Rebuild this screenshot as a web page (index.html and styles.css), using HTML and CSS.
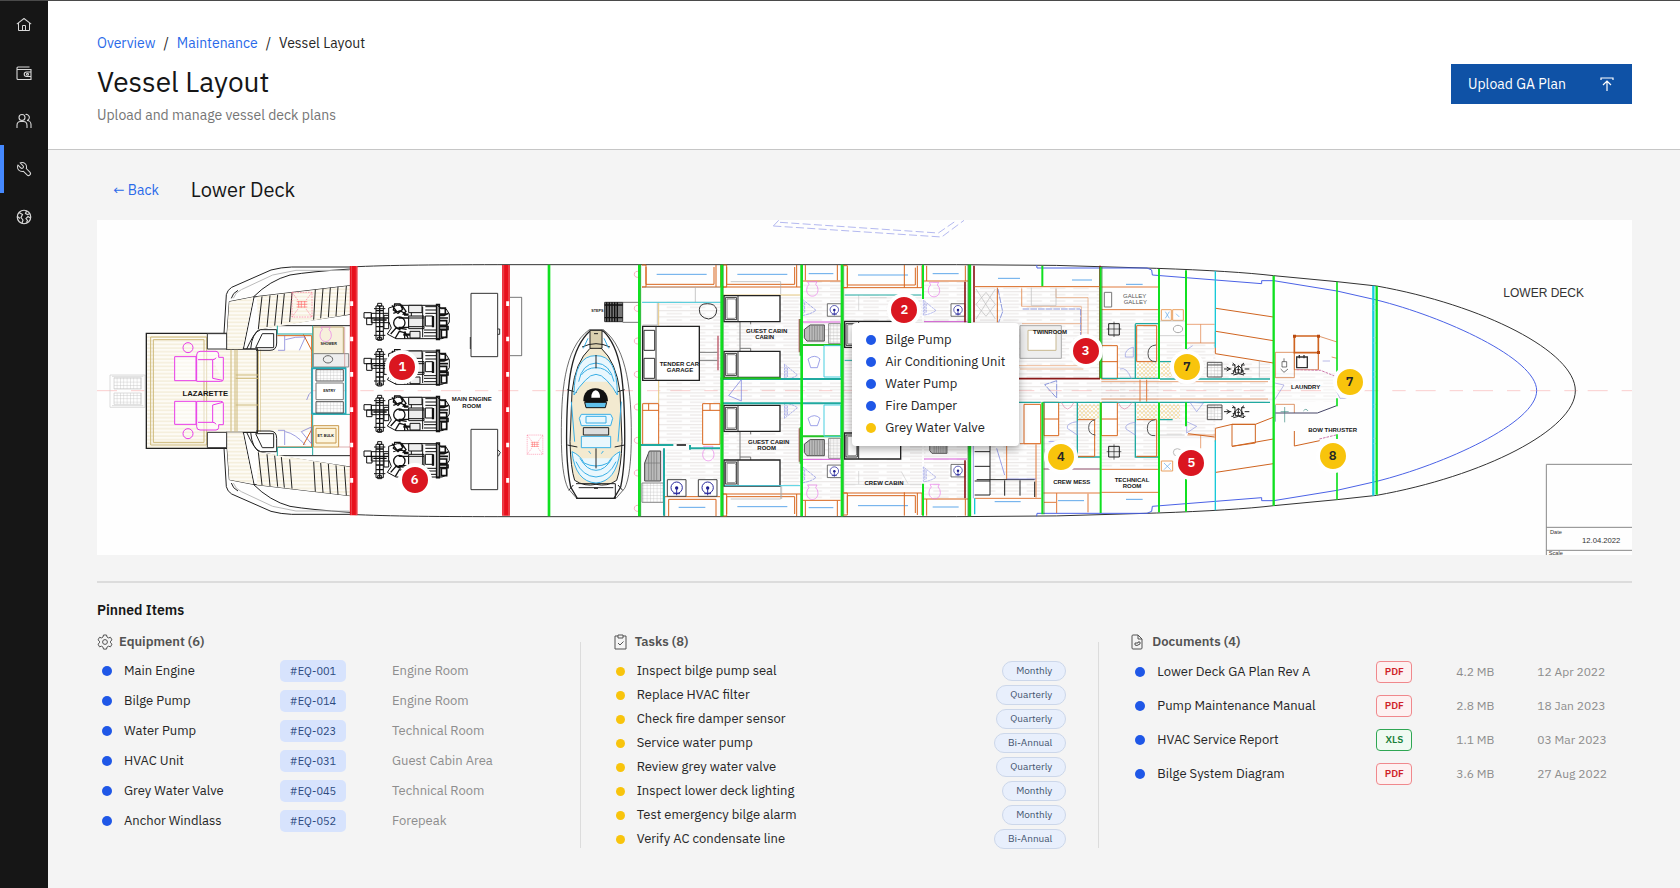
FILE: index.html
```html
<!DOCTYPE html>
<html lang="en">
<head>
<meta charset="utf-8">
<meta name="viewport" content="width=device-width, initial-scale=1">
<title>Vessel Layout</title>
<link rel="stylesheet" href="styles.css">
</head>
<body>
<div class="app">
<nav class="rail" aria-label="Main">
  <a class="rail-link" href="#home" aria-label="Home"><svg class="icon" viewBox="0 0 32 32"><path fill="currentColor" d="M16.6 2.2a1 1 0 0 0-1.2 0L1 13.4 2.2 15 4 13.6V26a2 2 0 0 0 2 2h20a2 2 0 0 0 2-2V13.6l1.8 1.4 1.2-1.6ZM18 26h-4v-8h4Zm2 0v-8a2 2 0 0 0-2-2h-4a2 2 0 0 0-2 2v8H6V12l10-7.700 10 7.800V26Z"/></svg></a>
  <a class="rail-link" href="#wallet" aria-label="Wallet"><svg class="icon" viewBox="0 0 32 32" fill="none" stroke="currentColor" stroke-width="2.200"><path d="M27 4H4a2 2 0 0 0-2 2v21a2 2 0 0 0 2 2h26V9H2M30 14h-9a4.500 4.500 0 0 0 0 9h9"/><circle cx="23" cy="18.500" r="2"/></svg></a>
  <a class="rail-link" href="#crew" aria-label="Crew"><svg class="icon" viewBox="0 0 32 32" fill="none" stroke="currentColor" stroke-width="2.200"><circle cx="12" cy="9" r="6"/><path d="M2 30v-5c0-5 3-8 7-8h6c4 0 7 3 7 8v5M19 3a6 6 0 0 1 3 12c5 0 8 4 8 8v7"/></svg></a>
  <a class="rail-link is-active" href="#maintenance" aria-label="Maintenance" aria-current="page"><svg class="icon" viewBox="0 0 32 32"><path fill="currentColor" d="M12.100 2a9.800 9.800 0 0 0-5.400 1.600L13.100 10a2.100 2.100 0 0 1 .2 3 2.100 2.100 0 0 1-3-.2L3.700 6.400A9.840 9.840 0 0 0 2 12.100 10.140 10.140 0 0 0 12.100 22.200a10.900 10.900 0 0 0 2.600-.3l6.700 6.700a5 5 0 0 0 7.100-7.100l-6.700-6.700a10.900 10.900 0 0 0 .3-2.600A10 10 0 0 0 12.100 2Zm8 10.100a7.610 7.610 0 0 1-.3 2.100l-.3 1.100.8.800 6.700 6.700a2.880 2.880 0 0 1 .9 2.100A2.720 2.720 0 0 1 27 27a2.900 2.900 0 0 1-4.200 0l-6.700-6.700-.8-.8-1.100.3a7.610 7.610 0 0 1-2.100.3 8.270 8.270 0 0 1-5.700-2.300A7.630 7.630 0 0 1 4 12.100a8.330 8.330 0 0 1 .3-2.200l4.400 4.400a4.140 4.140 0 0 0 5.900.2 4.140 4.140 0 0 0-.2-5.900L10 4.200a6.450 6.450 0 0 1 2-.3 8.270 8.270 0 0 1 5.700 2.300A8.490 8.490 0 0 1 20.100 12.100Z"/></svg></a>
  <a class="rail-link" href="#fleet" aria-label="Fleet"><svg class="icon" viewBox="0 0 32 32" fill="none" stroke="currentColor" stroke-width="2.400"><circle cx="16" cy="16" r="13.500"/><path d="m6 7 7 4-3 6 4 5-2 6M3 15l5 4M21 4l-2 5 4 2 5-2M29 18l-5-3-4 4 3 4-2 4"/></svg></a>
</nav>
<div class="page">
<header class="page-head">
  <div>
    <nav class="crumbs" aria-label="Breadcrumb"><a href="#overview">Overview</a><span>/</span><a href="#maintenance">Maintenance</a><span>/</span><span>Vessel Layout</span></nav>
    <h1>Vessel Layout</h1>
    <p class="subtitle">Upload and manage vessel deck plans</p>
  </div>
  <button class="upload" type="button">Upload GA Plan<svg class="icon" viewBox="0 0 16 16" fill="none" stroke="currentColor" stroke-width="1.200"><path d="M2 4V2h12v2M8 15V5M4 9l4-4 4 4"/></svg></button>
</header>
<main>
  <div class="deck-bar"><a class="back" href="#decks">← Back</a><h2>Lower Deck</h2></div>
  <section class="plan" aria-label="Lower deck plan">
  <svg class="drawing" viewBox="21 15 4605 1005" fill="none" stroke-width="3">
    <defs>
      <pattern id="wood" width="70" height="19" patternUnits="userSpaceOnUse"><path d="M0 2h70M0 11h46" stroke="#a99a96" stroke-width="1.500" opacity=".55"/></pattern>
      <pattern id="teak" width="90" height="22" patternUnits="userSpaceOnUse"><path fill="#fdfbf5" d="M0 0h90v22H0z"/><path d="M0 3h90M0 14h90" stroke="#e6dab4" stroke-width="2"/></pattern>
      <pattern id="tile" width="10" height="10" patternUnits="userSpaceOnUse"><path d="M0 1h10M1 0v10" stroke="#bbb" stroke-width="1.200"/></pattern>
      <pattern id="mesh" width="12" height="12" patternUnits="userSpaceOnUse"><path d="M0 0l12 12M12 0L0 12" stroke="#f0cf74" stroke-width="1.500"/></pattern>
      <symbol id="engine" viewBox="0 0 260 112" overflow="visible">
        <g stroke="#111" stroke-width="3">
          <path fill="#fff" d="M0 28h22v16H0zM8 44h16v20H8zM22 30h52v28H22zM36 8h22v100H36zM41 0h12v8H41zM41 102h12v9H41zM30 16h34M30 96h34M60 36h14v40H60z"/>
          <path d="M36 22h22M36 70h22M36 84h22M47 8v100M22 44h52M28 50h40" stroke-width="4"/>
          <path fill="#fff" d="M74 14l26-8h120l12 10h14l10 16v24l-8 12v32l-14 6H96L70 92l12-18-8-20z"/>
          <path d="M84 6l14 18M92 2h16l8 16-14 12-14-10zM112 4l14 20-10 10M88 30l20-8 18 10M80 92l16-18 14 6M94 104l12-20 16 4v18M122 84l10 20M104 74l24 4" stroke-width="4"/>
          <circle cx="106" cy="58" r="17" stroke-width="4"/><path d="M104 44h30v28h-30" stroke-width="4"/>
          <path fill="#eee" d="M134 38h46v38h-46zM134 6h40v22h-40zM138 84h30v20h-30z"/>
          <path d="M134 44h46M134 70h46M142 28v10M176 10v92M184 38h22v30h-22zM184 10h34M184 20h34M184 30h34M180 80h38M180 88h38M180 98h38" />
          <path d="M218 4h8v104h-8zM226 14h18v18h-18zM226 36h14l14-6M226 44h26M228 52h20v14h-20M226 70h26v8h-26M232 80h16v22h-16z" stroke-width="5"/>
          <path d="M207 38v34M120 34h14M118 94h20" stroke-width="7"/>
        </g>
      </symbol>
      <symbol id="bed" viewBox="0 0 168 78" overflow="visible"><path fill="#fff" stroke="#222" stroke-width="4" d="M0 0h168v78H0z"/><path stroke="#333" d="M4 6h34v66H4zM42 0v78"/><path stroke="#555" stroke-width="2" d="M9 10h22q5 0 5 6v46q0 6-5 6H9z"/></symbol>
      <symbol id="basin" viewBox="0 0 56 50" overflow="visible"><path fill="#fff" stroke="#444" d="M0 0h56v50H0z"/><circle cx="28" cy="24" r="17" stroke="#2a2a9c"/><circle cx="28" cy="25" r="5" fill="#1a1a8c"/><path stroke="#2a2a9c" d="M28 25v22M18 42h20"/></symbol>
      <symbol id="wc" viewBox="0 0 34 44" overflow="visible"><path stroke="#e879e8" stroke-width="2" d="M3 0h28l-4 8q7 6 7 16c0 26-34 26-34 0q0-10 7-16z"/></symbol>
      <symbol id="shower" viewBox="0 0 70 60" overflow="visible"><path fill="#bbb" stroke="#444" d="M22 4h44v50H12L4 44V18z"/><path stroke="#777" stroke-width="2" d="M20 6v48M28 6v48M36 6v48M44 6v48M52 6v48M60 6v48"/></symbol>
      <symbol id="door" viewBox="0 0 44 52" overflow="visible"><path stroke="#7f86e0" stroke-width="2" stroke-dasharray="9 2" d="M0 0v52Q28 48 44 36L0 0M5 8v38M10 12v32"/></symbol>
      <g id="console"><path stroke="#555" fill="url(#tile)" d="M0 6h44v44H0zM0 14h44"/><path stroke="#222" d="M50 26h22M58 20l10 6-10 6M76 8q10 4 7 14l-5 18h-6M110 8q-10 4-7 14l5 18h6M84 24l10-8 8 8v14H84zM78 44q16-8 32 0M88 28h10M93 16v22M74 14h10M102 14h10M112 26h14M76 32h8M102 32h8"/></g>
      <symbol id="warn" viewBox="0 0 64 78" overflow="visible"><path stroke="#f79" stroke-width="2" stroke-dasharray="5 3" d="M2 2h60v74H2zM2 2l18 24M62 2L44 26M2 76l18-24M62 76L44 52"/><path stroke="#f66" stroke-width="2" d="M16 30h32M16 38h32M16 46h32M22 28v20M30 28v20M40 28v20"/></symbol>
      <g id="stern">
        <path stroke="#222" d="M402 355l7-116q3-14 16-22l118-52q30-8 62-9h175M424 250q4-16 20-24M418 260l-10 142M418 260l72-14 290-34M490 246q50-50 110-66 60-10 180-18M492 246l-32 156M470 402q20-44 36-58l56-13 218-33M562 332h218"/>
        <path stroke="#bbb" d="M430 250q6-18 24-26l94-44 70-14h160"/>
        <path fill="url(#teak)" stroke="none" d="M418 260l72-14-32 156h-50zM500 245l280-33v86l-274 46z"/>
        <path stroke="#222" d="M516 244l-11 98M540 241l-9 95M563 239l-9 93M583 236l-9 92M606 233l-7 88M676 224l-5 90M699 221l-7 89M721 218l-6 89M744 215l-6 88M769 213l-6 87M482 402q4-50 30-58h48v40q0 22-20 22h-42M497 398l20-42h34v42z"/>
        <path stroke="#333" fill="#fff" d="M352 356h58v46h-58z"/>
      </g>
      <g id="hull">
        <path stroke="#333" d="M780 156C900 150 1050 149 1260 149H2600Q2900 148 3200 160 3430 168 3551 182L3741 200 3860 213C4180 270 4456 410 4456 527"/>
        <path stroke="#4b62e6" d="M2840 150l1 9h330l14 6 2 15 328 26v-9h36L3741 228 3860 255C4060 305 4340 430 4340 527"/>
      </g>
      <g id="window"><path stroke="#d8651c" d="M0 0h12v66h-12M0 66h240M222 66V0M236 0v66M12 6v52h204V6"/><path stroke="#5fa8ea" d="M44 28h150"/></g>
    </defs>
    <path fill="#fefefe" d="M21 15h4605v1005H21z"/>
    <path stroke="#f7b5b5" stroke-width="2" stroke-dasharray="60 42 40 30" d="M21 527h4605"/>
    <g stroke="#ccc" stroke-width="2"><path d="M60 480h105v97H60zM66 484h94M66 572h94"/><path fill="url(#tile)" d="M72 488h82v34H72zM72 534h82v34H72z"/></g>

    <path fill="url(#teak)" stroke="#222" stroke-width="4" d="M169 355h241v47h92v250h-92v48H169z"/>
    <path stroke="#cdb878" d="M182 366h168v324H182zM190 374h152v308H190zM435 404v246M441 404v246M505 404v246M512 404v246M437 480h68M437 490h68M437 570h68M423 404v246"/>
    <path fill="url(#teak)" d="M512 404h152v246H512z"/>
    <use href="#stern"/><use href="#stern" transform="matrix(1 0 0 -1 0 1054)"/>
    <use href="#hull"/><use href="#hull" transform="matrix(1 0 0 -1 0 1054)"/>
    <g stroke="#e83be8"><path fill="#fff8" d="M254 425h64v72h-64zM320 420q0-11 10-11h48q8 0 8 10v8h14v66q0 6-8 6h-72zM324 434h44q8 0 10-6M368 434v56l30 6M254 559h64v69h-64zM320 559h72q8 0 8 6v64h-14v8q0 8-8 8h-48q-10 0-10-10zM324 622h44q8 0 10 6M368 622v-52l30-8"/><circle cx="294" cy="398" r="15"/><circle cx="294" cy="656" r="15"/></g>
    <path stroke="#d8651c" d="M562 362h103v334H562M640 358l26 50M640 690l26-48"/><path stroke="#20a9a0" d="M562 357h105M562 332v26M562 697h105M668 720v-122h112M562 697v26M668 332v126h100"/>
    <path stroke="#6c6cd0" stroke-width="2" d="M584 362v44h-20M586 374q30-10 60-8l-18 40M584 690v-44h-20M586 650q30 6 60 40M634 650l30-14v50zM668 460v136M650 555q6-20 14-24"/>
    <path fill="#f7f0dc" stroke="#b9a26a" d="M670 336h90v80h-90z"/><path fill="#eee" stroke="#888" d="M670 416h106v40H670z"/><ellipse cx="714" cy="433" rx="14" ry="11" stroke="#666"/><use href="#wc" x="690" y="336" width="34" height="44"/>
    <path stroke="#21a9b8" stroke-width="5" d="M666 460h101v136H666z"/><path fill="url(#tile)" stroke="#555" d="M678 464h82v34h-82zM678 560h82v34h-82z"/><path fill="#fff" stroke="#777" d="M678 504h82v50h-82z"/>
    <path fill="#fdf6e0" stroke="#c99a4e" d="M670 632h76v64h-76zM678 640h60v44h-60z"/><path stroke="#c88" stroke-width="2" d="M746 696h34M764 336v120"/>
    <use href="#warn" x="604" y="230" width="64" height="78"/>
    <g stroke="#e8101c" stroke-width="23"><path d="M791 153v748M1248 150v752"/></g><g stroke="#fff" stroke-width="2" opacity=".35"><path d="M784 153v748M799 153v748M1241 150v752M1256 150v752"/></g>
    <g stroke="#fff" stroke-width="9" stroke-dasharray="14 92"><path d="M785 259v600M1253 259v600"/></g>
    <use href="#engine" x="822" y="265" width="260" height="112"/><use href="#engine" x="822" y="402" width="260" height="112"/><use href="#engine" x="822" y="541" width="260" height="112"/><use href="#engine" x="822" y="680" width="260" height="112"/>
    <g stroke="#333"><path d="M1143 235h80v190h-80zM1143 643h80v181h-80zM1223 342h6v16h-6M1141 366v36M1223 704l8 8-6 12"/><path stroke-width="2" d="M1260 247h35v175h-35"/></g>

    <g transform="translate(1170)">
      <use href="#warn" x="140" y="656" width="50" height="66"/>
      <path stroke="#b4b9f0" stroke-dasharray="24 10" d="M880 33L1385 66L1452 16M900 22L1375 54L1430 16"/><path stroke="#b4b9f0" d="M880 33l16-17"/>
      <g stroke="#333"><path fill="#777" d="M374 262h54v58h-54z"/><path stroke="#111" d="M380 262v58M388 262v58M396 262v58M404 262v58M412 262v58M374 270h54M374 308h54" stroke-width="4"/><path stroke-width="2" d="M428 262h48M428 322h48"/></g>
      <g stroke="#f58aa0" stroke-width="2"><path d="M476 170a9 9 0 1 0 0 16M476 272a9 9 0 1 0 0 16M476 370a9 9 0 1 0 0 16M476 470a9 9 0 1 0 0 16M476 568a9 9 0 1 0 0 16M476 668a9 9 0 1 0 0 16M476 766a9 9 0 1 0 0 16M476 872a9 9 0 1 0 0 16"/></g>
      <g stroke="#222"><path stroke-width="2" d="M328 344C250 400 244 540 244 660q0 120 20 160l26 30h118l26-30q20-40 20-160c0-120-10-260-84-316z"/><path stroke-width="4" fill="#fff" d="M330 348C272 400 262 500 260 640q-2 110 12 176l20 34h110l20-34q14-66 12-176c-2-140-10-240-64-292z"/><path fill="#f3ead0" d="M330 400q-44 40-54 130l-6 150q2 80 14 116 30 20 64 12 34 8 62-12 14-40 16-116l-6-150q-12-90-56-130-18-8-34 0z"/><path fill="#d9cfae" d="M330 346h36v54h-36z"/><path d="M306 396q42-20 84 0M262 524l28 8M434 524l-28 8M262 690l30 6M434 690l-30 6M288 806h118v44H288M280 810l-14 16M414 810l14 16M296 818h104" stroke-width="3"/></g>
      <g stroke="#39afe6"><path d="M282 540q0-120 66-118 64-2 64 118-12-24-32-44-32-36-64 0-20 20-34 44zM296 500q10-54 52-56 42 2 54 56M304 480q16-22 44-22t44 22M276 710q10 90 72 94 60-4 72-94-22 10-36 34-36 18-72 0-12-24-36-34zM288 740q20 44 60 46 40-2 60-46M300 730q20 36 48 36t48-36" fill="#e9f7fd"/><path fill="#e9f7fd" d="M304 598h88l6 12-6 22h-88l-6-22zM304 664h88v34h-88zM318 604h60v20h-60z"/><path d="M274 560l10 120M424 560l-10 120M324 370l-14 30M372 370l14 30M326 708l6 8M370 708l-6 8"/></g>
      <path fill="#111" d="M310 558q0-36 36-38 36 2 38 38l-20 8h-36z"/><path fill="#fff" d="M334 548q0-20 13-22 13 2 13 22z"/><path fill="#5fc0ea" stroke="#111" d="M314 562h66l-4 16h-58z"/><path fill="#ddd" stroke="#222" d="M310 638h76v22h-76z"/><path stroke="#222" d="M348 420v40M348 700v60M342 356h12M342 820h12"/>

      <g fill="url(#wood)"><path d="M536 260h188v430H536zM488 560h230v130H488zM732 240h230v250H732zM732 570h230v240H732zM970 198h112v190H970zM970 668h112v186H970zM732 500h1650v62H732zM556 704h164v88H556z"/></g>
      <use href="#window" x="486" y="150"/><use href="#window" x="728" y="150"/>
      <use href="#window" transform="matrix(1 0 0 -1 728 903)"/><path stroke="#d8651c" d="M554 903v-58h166M566 903v-50h142v50M968 198h114M976 150v46M1072 150v46M968 856h114M976 903v-46M1072 903v-46"/><path stroke="#5fa8ea" d="M596 877h80M986 176h74M986 878h74"/>
      <path stroke="#aaa" stroke-width="2" d="M488 217h234M488 262h234M646 217v45M488 330h44V264M752 200h150v38M752 852h150v-38M905 812v40"/><path stroke="#e6c880" d="M536 262v70M536 498v66M730 240h230"/>
      <path fill="#fff" stroke="#222" stroke-width="4" d="M488 334h170v162H488z"/><path stroke="#333" d="M528 334v162M492 346h32v60h-32zM492 430h32v60h-32zM658 284q0-18 24-18t28 18q0 24-24 28-28-4-28-28z"/>
      <path stroke="#d8651c" fill="#fff" d="M488 566h48v122h-48zM668 566h52v122h-52zM488 586h48M668 586h52M506 566v20M690 566v20"/>
      <path stroke="#b56" stroke-width="4" d="M714 362v104M958 312v100M958 640v100"/><path stroke="#777" d="M660 412h52M660 436h52M732 320h48v90M732 650h48v86M780 308h32v20M780 400h32v20M780 638h32v20M780 726h32v20"/>
      <use href="#bed" x="732" y="242" width="168" height="78"/><use href="#bed" x="732" y="409" width="168" height="78"/><use href="#bed" x="732" y="571" width="168" height="78"/><use href="#bed" x="732" y="735" width="168" height="78"/>
      <use href="#shower" x="968" y="326" width="70" height="58"/><use href="#shower" x="968" y="670" width="70" height="58"/><path fill="#bbb" stroke="#444" d="M508 708h34v90h-48v-54z"/><path stroke="#777" stroke-width="2" d="M494 744h48M506 712v84M514 708v90M522 708v90M530 708v90"/>
      <path fill="url(#tile)" stroke="#888" d="M1046 326h36v60h-36zM1046 670h36v60h-36zM486 804h64v58h-64z"/>
      <path stroke="#d85ad8" d="M968 321h114M968 733h114M550 704v90"/><use href="#wc" x="980" y="200" width="34" height="44"/><use href="#wc" x="980" y="810" width="34" height="44"/><use href="#wc" x="668" y="694" width="34" height="44"/>
      <use href="#basin" x="562" y="794" width="56" height="50"/><use href="#basin" x="655" y="794" width="56" height="50"/><use href="#basin" x="1042" y="260" width="42" height="50"/><use href="#basin" x="1042" y="744" width="42" height="50"/>
      <use href="#door" x="964" y="250" width="44" height="52"/><use href="#door" x="964" y="752" width="44" height="52"/><use href="#door" x="908" y="448" width="50" height="46"/><use href="#door" transform="matrix(1 0 0 -1 908 610)" width="50" height="46"/><path stroke="#6c74dc" d="M784 494l-38 48 38 16zM984 432q20-16 36 0l-8 26h-20zM984 610q20-16 36 0l-8 22h-20z" stroke-width="2"/>
      <path stroke="#20a9a0" stroke-width="6" d="M482 690h98M630 700h90M630 690v14M722 492h362M724 565h362M552 700v202"/><path stroke="#222" stroke-width="5" d="M590 690h28"/>
      <path stroke="#25c325" stroke-width="6" d="M965 390h118M965 664h118M722 490h180M962 312v110M962 636v110"/><path stroke="#48cfe0" d="M1032 392h50v94h-50zM1032 570h50v94h-50zM734 812h226M486 262h236"/>
      <g stroke="#10e020" stroke-width="8"><path d="M207 149v755M478 149v755M725 149v755M965 149v755M1086 149v755" /></g><path stroke="#129e20" stroke-width="2" d="M482 149v755M730 149v755M1091 149v755"/>
    </g>

    <g transform="translate(2250)">
      <g fill="url(#wood)"><path d="M14 240h232v580H14zM252 200h128v190H252zM252 660h128v190H252zM404 218h376v272H404zM784 290h172v470H784zM450 680h152v160H450zM610 560h170v170H610zM960 380h166v110H960zM960 562h166v110H960zM1126 440h164v50h-164z"/></g>
      <use href="#window" x="10" y="152"/><use href="#window" transform="matrix(1 0 0 -1 10 900)"/>
      <path stroke="#d8651c" d="M193 150v68M193 832v70M252 198h132M260 152v46M376 152v46M252 852h132M260 902v-50M376 902v-50"/><path stroke="#5fa8ea" d="M278 176h78M278 876h78M474 190h66M696 195h60M464 860h78M654 857h78M858 208h50M858 853h50"/>
      <use href="#bed" x="14" y="288" width="168" height="140"/><use href="#bed" x="14" y="620" width="168" height="146"/>
      <path stroke="#ccc" stroke-width="2" d="M56 240v46M90 248h50M56 768v40M14 808h230M184 770l20 36"/><path stroke="#20a9a0" d="M14 240h230M14 436h24"/>
      <use href="#shower" x="260" y="670" width="70" height="50"/><path stroke="#d85ad8" d="M252 320h130M252 732h130"/><use href="#wc" x="265" y="202" width="34" height="44"/><use href="#wc" x="267" y="808" width="34" height="44"/><use href="#basin" x="333" y="260" width="42" height="50"/><use href="#basin" x="333" y="742" width="42" height="50"/><use href="#door" x="250" y="252" width="38" height="52"/><use href="#door" x="250" y="752" width="38" height="52"/>
      <path stroke="#8b1a1a" stroke-width="5" d="M402 152v170M375 200v122M375 736v114M536 491h244M780 152v338"/><path stroke="#d8651c" d="M404 215h376M472 218v104"/><path stroke="#e59a68" stroke-width="2" d="M545 218v56M648 222v26h96v204M545 222v52h180M546 326h180M536 452h200M540 462h190M724 276v160"/>
      <path stroke="#5566cc" stroke-width="2" d="M548 282h172M722 282v156M474 222l14 68-12 32M650 497l-36 12 36 40z" stroke-dasharray="20 3"/><path stroke="#bbb" stroke-width="2" d="M408 222l58 90M466 222l-58 90M408 268l30-36 28 36-28 36zM574 218v54h74v-54"/>
      <path stroke="#aaa" fill="#eee" d="M540 332h124v98H540z"/><path stroke="#c8b890" fill="#fff" d="M564 346h84v60h-84z"/>
      <path fill="#fff" stroke="#d8651c" d="M552 568h50v118h-50zM612 562h44v100h-44zM612 612h44M784 392h48v100h-48zM784 440h48M784 562h48v100h-48zM784 612h48"/>
      <g stroke="#e07a3c"><path d="M610 762h170M610 834h170M650 834v60M744 836v56M612 862h36M784 216h172M784 284h172M784 763h172M784 832h172M404 850h200M500 686v108M588 688v160M540 686h64M900 494v66M920 494v66"/><path stroke-width="2" d="M784 500h500M784 552h500M1040 328h84M1082 328v56M1040 384h86M1042 660h84M1082 660v40"/></g>
      <path stroke="#222" d="M404 710h46M404 754h46M404 798h46M404 840h46M450 684v156M410 794h174M494 796v46M540 796v46M584 800v46"/><path stroke="#6c74dc" stroke-width="2" d="M500 792h88M626 680h20M612 762h168M470 700l24 80M400 686v164"/>
      <g stroke="#222"><path fill="#eee" d="M806 326h32v34h-32zM806 694h32v32h-32z"/><path stroke-width="2" d="M800 342h44M822 320v46M800 710h44M822 688v46"/><path stroke="#777" d="M793 232h22v44h-22z"/></g>
      <g stroke="#20a9a0" stroke-width="4"><path d="M536 562h66M608 562h172M786 562h170M960 492h330M958 562h332M786 490h170M712 562v164h68M886 326h70M886 328v162M886 562v164h68M960 440h38M960 614h38"/></g>
      <g fill="url(#mesh)"><path d="M890 442h60v48h-60zM714 568h64v44h-64zM890 568h62v44h-62zM960 568h60v44h-60zM962 442h34v44h-34z"/></g>
      <path stroke="#d8651c" d="M890 332h60v108h-60zM714 614h50v110h-50M890 614h60v110h-60"/><path stroke="#555" d="M948 390q-24 2-24 26t24 24M766 614q-20 4-20 24t20 22M946 614q-24 2-24 26t24 22"/>
      <g stroke="#8f95e0" stroke-width="2"><path d="M880 396q-28 8-24 30h24zM840 462q20-8 34 30M712 620q-34 4-30 20l30 20zM886 622q-34 4-28 20l28 18zM1040 620l30 14-30 20zM1040 404l18-12M1050 562l20 28 20-26z"/><path stroke="#d8a" d="M664 562q18 40 38 0M834 562q18 40 42 0"/></g>
      <path stroke="#e9a060" d="M964 284h30v32h-30zM998 284h32v32h-32zM964 738h34v30h-34z"/><path stroke="#bbb" stroke-width="2" d="M960 362h74M960 660h74M960 318h74"/><ellipse cx="1014" cy="342" rx="14" ry="11" stroke="#aaa"/><ellipse cx="1012" cy="712" rx="12" ry="11" stroke="#bbb"/>
      <path stroke="#5fa8ea" stroke-width="2" d="M976 290l12 20M988 290l-12 20M1008 296l10 10M972 744l20 20M992 744l-20 20"/>
      <g stroke="#cf6420"><path d="M1128 280l172 26M1128 349l172 28M1126 350v66l174 28M1128 772l172-26M1126 640l50-12h70l56-22M1176 628h70v56l-70 10zM1176 694l124-22M1044 656l80 10M1126 640v40"/></g>
      <use href="#console" transform="translate(1102 436)"/><use href="#console" transform="translate(1102 564)"/><path stroke="#aaa" stroke-width="2" d="M1258 436v52"/>
      <path stroke="#17c9d8" stroke-width="4" d="M1126 168v230M1126 676v210M404 850v48"/>
      <g stroke="#10e020" stroke-width="6"><path d="M249 149v103M249 806v96M607 152v62M607 562v336M782 156v334M782 562v332M957 162v330M957 562v330M1038 166v236M1038 562v72M1038 760v130M6 149v755"/></g><path stroke="#10d020" stroke-width="9" d="M389 149v755"/><path stroke="#20761b" stroke-width="2" d="M384 149v755M786 156v334M612 562v336"/>
    </g>

    <g transform="translate(3420)">
      <g fill="url(#wood)" opacity=".6"><path d="M134 470h186v90H134z"/></g>
      <g stroke="#cf6420"><path stroke-width="5" d="M193 363h72v50h-72z"/><path stroke-width="2" d="M136 412h57v76h-57zM193 412v52h72v-50M265 363l56 18M265 464v-50M305 426l16 4M136 568h57v26"/><path d="M193 648v45l76-16"/></g><path fill="#b84a10" d="M189 359h9v9h-9zM261 359h9v9h-9zM261 408h9v9h-9z"/>
      <g stroke="#333"><path stroke-width="4" d="M200 426h32v32h-32zM208 420v10M222 420v10"/><path stroke-width="2" d="M156 440h14v16h-14zM162 430v10M152 462l10 10 12-10"/><path stroke="#446" d="M136 594h126l58-22"/><path stroke="#3a8a80" d="M152 590h24M164 576v46M220 588q8-10 14 0M136 570v50" stroke-width="2"/></g>
      <path stroke="#99d" stroke-width="2" d="M134 504l28 6-28 44M320 530l10 20h20M278 438h22" /><path stroke="#c7a" stroke-dasharray="8 3" d="M200 464l72 2 44 18M268 672l50-12"/>
      <path stroke="#18cfe0" stroke-width="7" d="M430 212v630"/><path stroke="#9be6ee" stroke-width="2" d="M438 268h-8M438 286h-8M438 368h-8M438 384h-8M438 470h-8M438 486h-8M438 568h-8M438 582h-8M438 670h-8M438 686h-8M438 766h-8M438 780h-8"/>
      <g stroke="#10e020" stroke-width="7"><path d="M131 182v690M440 213v626"/></g><path stroke="#10e020" stroke-width="5" d="M321 200v270M321 550v24M321 658v14M321 772v82"/>
      <path stroke="#888" d="M1206 748H949v272M949 937h257M949 1006h257"/>
    </g>
    <g class="room-text">
      <text x="346" y="543" class="room-lg">LAZARETTE</text><text x="1145" y="559">MAIN ENGINE</text><text x="1145" y="579">ROOM</text>
      <text x="1768" y="452">TENDER CAR</text><text x="1770" y="472">GARAGE</text><text x="2030" y="354">GUEST CABIN</text><text x="2024" y="372">CABIN</text><text x="2036" y="688">GUEST CABIN</text><text x="2030" y="706">ROOM</text>
      <text x="2382" y="809">CREW CABIN</text><text x="2880" y="358">TWINROOM</text><text x="3134" y="250" class="room-light">GALLEY</text><text x="3136" y="268" class="room-light">GALLEY</text><text x="2945" y="806">CREW MESS</text><text x="3126" y="800">TECHNICAL</text><text x="3126" y="820">ROOM</text><text x="3647" y="523">LAUNDRY</text><text x="3728" y="651">BOW THRUSTER</text>
      <text x="716" y="391" class="room-sm">SHOWER</text><text x="718" y="530" class="room-sm">ENTRY</text><text x="707" y="666" class="room-sm">ET. BULK</text><text x="1522" y="290" class="room-sm">STEPS</text>
    </g>
    <g class="sheet-text"><text x="4240" y="247" class="sheet-title">LOWER DECK</text><text x="4380" y="956">Date</text><text x="4476" y="984" class="sheet-date">12.04.2022</text><text x="4376" y="1020">Scale</text></g>
  </svg>
  <button class="pin red pin-main" type="button">1</button>
  <button class="pin red pin-six" type="button">6</button>
  <button class="pin red pin-two" type="button" aria-expanded="true">2</button>
  <button class="pin red pin-three" type="button">3</button>
  <button class="pin amber pin-four" type="button">4</button>
  <button class="pin red pin-five" type="button">5</button>
  <button class="pin amber pin-seven" type="button">7</button>
  <button class="pin amber pin-laundry" type="button">7</button>
  <button class="pin amber pin-eight" type="button">8</button>
  <ul class="popover"><li><i class="dot"></i>Bilge Pump</li><li><i class="dot"></i>Air Conditioning Unit</li><li><i class="dot"></i>Water Pump</li><li><i class="dot"></i>Fire Damper</li><li><i class="dot yellow"></i>Grey Water Valve</li></ul>
  </section>
  <section class="pinned">
    <h3>Pinned Items</h3>
    <div class="columns">
      <section class="column equipment">
        <h4><svg class="icon" viewBox="0 0 16 16" fill="none" stroke="currentColor"><circle cx="8" cy="8" r="2.400"/><path d="M6.500 1h3l.5 2 1.500.9 2-.6 1.500 2.600L13.500 7.200v1.600l1.500 1.400-1.500 2.600-2-.6-1.500.9-.5 2h-3l-.5-2-1.500-.9-2 .6L1 10.200l1.500-1.400V7.200L1 5.900l1.500-2.600 2 .6L6 3z" stroke-linejoin="round"/></svg>Equipment (6)</h4>
        <table><tbody>
          <tr><td><i class="dot"></i></td><td>Main Engine</td><td><span class="code">#EQ-001</span></td><td class="muted">Engine Room</td></tr>
          <tr><td><i class="dot"></i></td><td>Bilge Pump</td><td><span class="code">#EQ-014</span></td><td class="muted">Engine Room</td></tr>
          <tr><td><i class="dot"></i></td><td>Water Pump</td><td><span class="code">#EQ-023</span></td><td class="muted">Technical Room</td></tr>
          <tr><td><i class="dot"></i></td><td>HVAC Unit</td><td><span class="code">#EQ-031</span></td><td class="muted">Guest Cabin Area</td></tr>
          <tr><td><i class="dot"></i></td><td>Grey Water Valve</td><td><span class="code">#EQ-045</span></td><td class="muted">Technical Room</td></tr>
          <tr><td><i class="dot"></i></td><td>Anchor Windlass</td><td><span class="code">#EQ-052</span></td><td class="muted">Forepeak</td></tr>
        </tbody></table>
      </section>
      <section class="column tasks">
        <h4><svg class="icon" viewBox="0 0 16 16" fill="none" stroke="currentColor"><path d="M5 2H2v13h11V2h-3M5 1h5v3H5zM5 9l2 2 3.500-3.500"/></svg>Tasks (8)</h4>
        <ul>
          <li><i class="dot yellow"></i>Inspect bilge pump seal<span class="tag">Monthly</span></li>
          <li><i class="dot yellow"></i>Replace HVAC filter<span class="tag">Quarterly</span></li>
          <li><i class="dot yellow"></i>Check fire damper sensor<span class="tag">Quarterly</span></li>
          <li><i class="dot yellow"></i>Service water pump<span class="tag">Bi-Annual</span></li>
          <li><i class="dot yellow"></i>Review grey water valve<span class="tag">Quarterly</span></li>
          <li><i class="dot yellow"></i>Inspect lower deck lighting<span class="tag">Monthly</span></li>
          <li><i class="dot yellow"></i>Test emergency bilge alarm<span class="tag">Monthly</span></li>
          <li><i class="dot yellow"></i>Verify AC condensate line<span class="tag">Bi-Annual</span></li>
        </ul>
      </section>
      <section class="column documents">
        <h4><svg class="icon" viewBox="0 0 16 16" fill="none" stroke="currentColor"><path d="M8 1H3q-1 0-1 1v12q0 1 1 1h8q1 0 1-1V5zM8 1v4h4M5 11V9h3V8h2v2L7 11.500z"/></svg>Documents (4)</h4>
        <table><tbody>
          <tr><td><i class="dot"></i></td><td>Lower Deck GA Plan Rev A</td><td><span class="file">PDF</span></td><td class="muted">4.2 MB</td><td class="muted">12 Apr 2022</td></tr>
          <tr><td><i class="dot"></i></td><td>Pump Maintenance Manual</td><td><span class="file">PDF</span></td><td class="muted">2.8 MB</td><td class="muted">18 Jan 2023</td></tr>
          <tr><td><i class="dot"></i></td><td>HVAC Service Report</td><td><span class="file sheet">XLS</span></td><td class="muted">1.1 MB</td><td class="muted">03 Mar 2023</td></tr>
          <tr><td><i class="dot"></i></td><td>Bilge System Diagram</td><td><span class="file">PDF</span></td><td class="muted">3.6 MB</td><td class="muted">27 Aug 2022</td></tr>
        </tbody></table>
      </section>
    </div>
  </section>
</main>
</div>
</div>
</body>
</html>
```
FILE: styles.css
```css
* { box-sizing: border-box; }
body { margin: 0; background: #f4f4f4; color: #262626; font: 13px/20px "IBM Plex Sans", "Noto Sans", sans-serif; }
h1, h2, h3, h4, p, ul { margin: 0; padding: 0; }
ul { list-style: none; }
a { color: #2a6ae9; text-decoration: none; }
button { font: inherit; border: 0; cursor: pointer; }
.icon { width: 16px; height: 16px; flex: none; display: block; }
.app { display: flex; min-height: 100vh; border-top: 1px solid #4a4a4a; }
.rail { flex: none; width: 48px; background: #161616; }
.rail-link { display: flex; height: 48px; align-items: center; justify-content: center; color: #d8d8d8; border-left: 4px solid transparent; padding-right: 4px; }
.rail-link.is-active { border-left-color: #4589ff; }
.page { flex: 1; min-width: 0; }
.page-head { display: flex; justify-content: space-between; align-items: flex-start; padding: 32px 48px 24px 49px; background: #fff; border-bottom: 1px solid #c6c6c6; font-size: 14px; }
.crumbs { display: flex; gap: 8px; }
h1 { margin-top: 9px; font-size: 28px; line-height: 40px; font-weight: 400; color: #161616; }
.subtitle { margin-top: 3px; color: #757575; }
.upload { display: flex; justify-content: space-between; align-items: center; gap: 32px; width: 181px; height: 40px; margin-top: 31px; padding: 0 17px; background: #0f52a6; color: #fff; font-size: 14px; }
main { padding: 24px 48px 32px 49px; }
.deck-bar { display: flex; align-items: center; gap: 32px; padding: 2px 16px 0; font-size: 14px; }
h2 { font-size: 20px; line-height: 28px; font-weight: 400; color: #161616; }
.plan { position: relative; margin-top: 16px; background: #fff; }
.drawing { display: block; width: 100%; height: auto; }
.room-text { fill: #161616; font: bold 18px "Liberation Sans", sans-serif; text-anchor: middle; }
.room-text .room-lg { font-size: 23px; }
.room-text .room-sm { font-size: 11px; }
.room-text .room-light { fill: #555; font-weight: 400; }
.sheet-text { fill: #333; font: 17px "Liberation Sans", sans-serif; }
.sheet-text .sheet-title { font-size: 36px; }
.sheet-text .sheet-date { font-size: 23px; }
.pin { position: absolute; width: 34px; height: 34px; margin: -17px 0 0 -17px; padding: 0; border: 4px solid #fff; border-radius: 50%; font-size: 13px; font-weight: 600; line-height: 24px; z-index: 2; }
.red { background: #da1620; color: #fff; }
.amber { background: #f8c40c; color: #262626; }
.pin-main { left: 19.9%; top: 43.9%; }
.pin-six { left: 20.7%; top: 77.6%; }
.pin-two { left: 52.6%; top: 26.9%; }
.pin-three { left: 64.4%; top: 39.1%; }
.pin-four { left: 62.8%; top: 70.7%; }
.pin-five { left: 71.3%; top: 72.4%; }
.pin-seven { left: 71%; top: 43.9%; }
.pin-laundry { left: 81.6%; top: 48.5%; }
.pin-eight { left: 80.5%; top: 70.4%; }
.popover { position: absolute; left: 49.2%; top: 30.7%; width: 167px; padding: 6px 14px 7px; background: #fff; border-radius: 4px; box-shadow: 0 3px 8px #0005; }
.popover li { display: flex; align-items: center; gap: 9px; line-height: 22px; white-space: nowrap; }
.dot { display: block; flex: none; width: 10px; height: 10px; border-radius: 50%; background: #1f57e7; }
.dot.yellow { background: #f8c40c; }
.pinned { margin-top: 26px; padding-top: 17px; border-top: 2px solid #dcdcdc; }
h3 { font-size: 14px; line-height: 20px; font-weight: 600; color: #161616; }
.columns { display: grid; grid-template-columns: 483fr 519fr 534fr; margin-top: 12px; }
.column { position: relative; }
.column + .column::before { content: ""; position: absolute; left: 0; top: 10px; height: 206px; border-left: 1px solid #dcdcdc; }
h4 { display: flex; align-items: center; gap: 6px; font-size: 13px; line-height: 20px; font-weight: 600; color: #525252; }
table { width: 100%; table-layout: fixed; border-collapse: collapse; white-space: nowrap; }
td { padding: 0; }
td .dot { margin-left: 5px; }
.muted { color: #8d8d8d; }
.equipment table { margin-top: 4px; }
.equipment tr { height: 30px; }
.equipment td:nth-child(1) { width: 27px; }
.equipment td:nth-child(2) { width: 156px; }
.equipment td:nth-child(3) { width: 112px; }
.code { display: block; width: 66px; border-radius: 5px; background: #d7e3fd; color: #2c4a80; font-size: 11px; line-height: 22px; text-align: center; }
.tasks { padding: 0 32px 0 33px; }
.tasks ul { margin-top: 7px; }
.tasks li { display: flex; align-items: center; gap: 12px; height: 24px; padding-left: 3px; }
.tasks li .dot { width: 9px; height: 9px; }
.tag { margin-left: auto; padding: 0 13px; border: 1px solid #ccd7ea; border-radius: 10px; background: #e8effc; color: #44546f; font-size: 10px; line-height: 18px; }
.documents { padding-left: 32px; }
.documents table { margin-top: 3px; }
.documents tr { height: 34px; }
.documents .muted { font-size: 12px; }
.documents td:nth-child(1) { width: 27px; }
.documents td:nth-child(2) { width: 219px; }
.documents td:nth-child(3) { width: 80px; }
.documents td:nth-child(4) { width: 81px; }
.file { display: block; width: 36px; border: 1px solid #f0888c; border-radius: 4px; background: #fdf1f1; color: #cf1f29; font-size: 10px; font-weight: 600; line-height: 20px; text-align: center; }
.file.sheet { border-color: #2fa653; background: #f0faf2; color: #198038; }
```
